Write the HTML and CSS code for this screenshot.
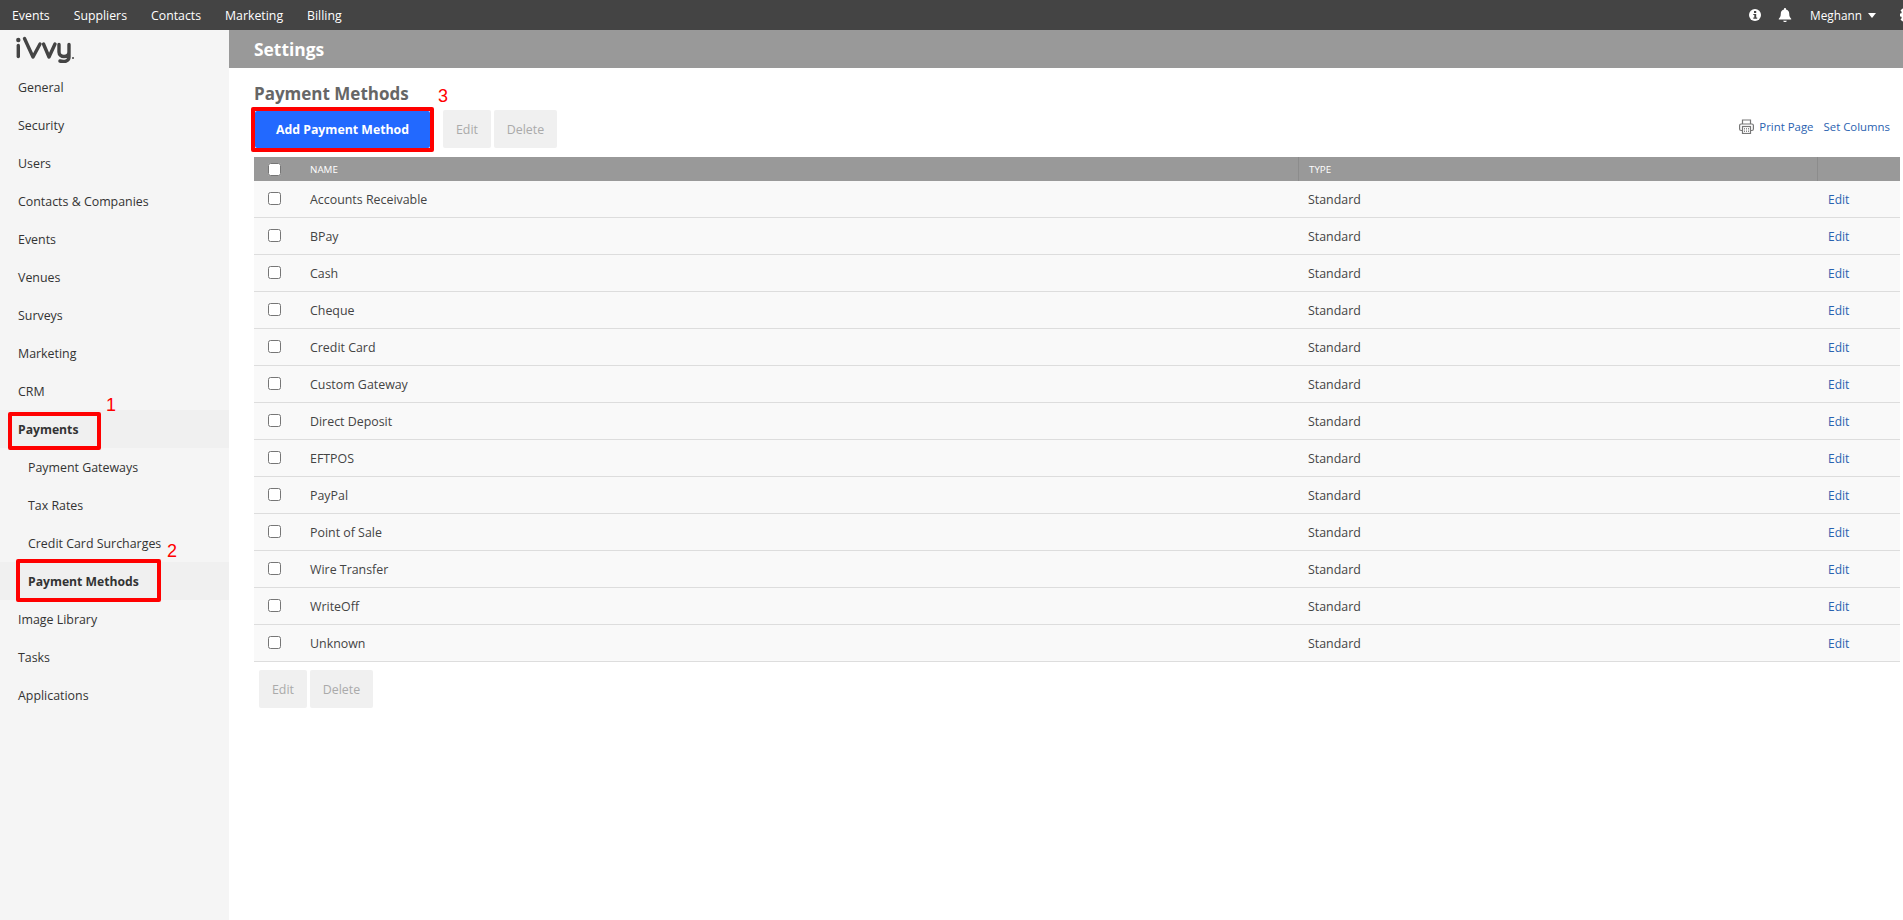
FILE: index.html
```html
<!DOCTYPE html>
<html lang="en">
<head>
<meta charset="utf-8">
<title>Settings - Payment Methods</title>
<link rel="stylesheet" href="styles.css">
</head>
<body>
<header class="topbar">
  <nav class="topnav">
    <a>Events</a><a>Suppliers</a><a>Contacts</a><a>Marketing</a><a>Billing</a>
  </nav>
  <div class="topright">
    <svg class="ico-info" viewBox="0 0 12 12"><circle cx="6" cy="6" r="6" fill="#fff"/><rect x="5" y="2" width="2.2" height="2" fill="#444"/><path d="M4.3 5h2.9v3.6h1v1.1H4.300V8.600h1V6.100h-1z" fill="#444"/></svg>
    <svg class="ico-bell" viewBox="0 0 14 14"><path d="M7 0c.6 0 1 .4 1 1v.6c2 .4 3.200 2 3.200 4 0 3 .8 4 2 5.200v.7H.8v-.7c1.200-1.200 2-2.200 2-5.200 0-2 1.200-3.600 3.200-4V1c0-.6.4-1 1-1zM5.200 12.700h3.600C8.800 13.500 8 14 7 14s-1.800-.5-1.800-1.300z" fill="#fff"/></svg>
    <span class="user">Meghann</span>
    <span class="caret"></span>
    <svg class="ico-cog" viewBox="0 0 14 14"><path d="M5.500 0h3v2l1.500.7 1.500-1.300 2 2-1.300 1.600.6 1.500H14v3h-1.200l-.6 1.500 1.300 1.500-2 2-1.500-1.300-1.500.6V14h-3v-1.200L4 12.200l-1.500 1.300-2-2L1.800 10l-.6-1.500H0v-3h1.200L1.800 4 .5 2.400l2-2L4 1.700l1.500-.6z" fill="#fff"/></svg>
  </div>
</header>
<div class="layout">
  <aside class="sidebar">
    <div class="logo">
      <svg viewBox="0 0 60 28" width="60" height="28">
        <g fill="none" stroke="#444" stroke-width="3.400" stroke-linecap="round" stroke-linejoin="round">
          <path d="M3.300 10.500v11"/>
          <path d="M9.500 3.500l8.500 18.500 7-13"/>
          <path d="M28.500 9l5.500 13 6-13"/>
          <path d="M44 9.500v7.500c0 6 10 6 10 0V9.500M54 16v6c0 4.500-5 5-9 4"/>
        </g>
        <circle cx="3.300" cy="5" r="2.200" fill="#444"/>
        <circle cx="58" cy="23" r="1" fill="#444"/>
      </svg>
    </div>
    <ul class="sidenav">
      <li>General</li>
      <li>Security</li>
      <li>Users</li>
      <li>Contacts &amp; Companies</li>
      <li>Events</li>
      <li>Venues</li>
      <li>Surveys</li>
      <li>Marketing</li>
      <li>CRM</li>
      <li class="active">Payments</li>
      <li class="sub">Payment Gateways</li>
      <li class="sub">Tax Rates</li>
      <li class="sub">Credit Card Surcharges</li>
      <li class="sub active">Payment Methods</li>
      <li>Image Library</li>
      <li>Tasks</li>
      <li>Applications</li>
    </ul>
  </aside>
  <main class="main">
    <div class="pagehead">Settings</div>
    <div class="content">
      <h2 class="title">Payment Methods</h2>
      <div class="toolbar">
        <div class="actions">
          <button class="btn primary">Add Payment Method</button>
          <button class="btn off edit">Edit</button>
          <button class="btn off del">Delete</button>
        </div>
        <div class="links">
          <svg class="ico-print" viewBox="0 0 15 15"><g fill="none" stroke="#777" stroke-width="1.200"><path d="M3.500 5V1h8v4"/><rect x=".6" y="5" width="13.800" height="6.500" rx="1.500"/><rect x="3.500" y="7.500" width="8" height="7" fill="#fff"/></g><path d="M5 9.500h5M5 11h5M5 12.500h5" stroke="#888" stroke-dasharray="1 1"/></svg>
          <a>Print Page</a>
          <a>Set Columns</a>
        </div>
      </div>
      <table class="grid">
        <thead>
          <tr>
            <th class="c-check"><input type="checkbox"></th>
            <th class="c-name">NAME</th>
            <th class="c-type">TYPE</th>
            <th class="c-act"></th>
          </tr>
        </thead>
        <tbody>
          <tr><td><input type="checkbox"></td><td>Accounts Receivable</td><td>Standard</td><td><a>Edit</a></td></tr>
          <tr><td><input type="checkbox"></td><td>BPay</td><td>Standard</td><td><a>Edit</a></td></tr>
          <tr><td><input type="checkbox"></td><td>Cash</td><td>Standard</td><td><a>Edit</a></td></tr>
          <tr><td><input type="checkbox"></td><td>Cheque</td><td>Standard</td><td><a>Edit</a></td></tr>
          <tr><td><input type="checkbox"></td><td>Credit Card</td><td>Standard</td><td><a>Edit</a></td></tr>
          <tr><td><input type="checkbox"></td><td>Custom Gateway</td><td>Standard</td><td><a>Edit</a></td></tr>
          <tr><td><input type="checkbox"></td><td>Direct Deposit</td><td>Standard</td><td><a>Edit</a></td></tr>
          <tr><td><input type="checkbox"></td><td>EFTPOS</td><td>Standard</td><td><a>Edit</a></td></tr>
          <tr><td><input type="checkbox"></td><td>PayPal</td><td>Standard</td><td><a>Edit</a></td></tr>
          <tr><td><input type="checkbox"></td><td>Point of Sale</td><td>Standard</td><td><a>Edit</a></td></tr>
          <tr><td><input type="checkbox"></td><td>Wire Transfer</td><td>Standard</td><td><a>Edit</a></td></tr>
          <tr><td><input type="checkbox"></td><td>WriteOff</td><td>Standard</td><td><a>Edit</a></td></tr>
          <tr><td><input type="checkbox"></td><td>Unknown</td><td>Standard</td><td><a>Edit</a></td></tr>
        </tbody>
      </table>
      <div class="actions bottom">
        <button class="btn off edit">Edit</button>
        <button class="btn off del">Delete</button>
      </div>
    </div>
  </main>
</div>
<div class="mark box-1"></div>
<div class="mark box-2"></div>
<div class="mark box-3"></div>
<span class="num num-1">1</span>
<span class="num num-2">2</span>
<span class="num num-3">3</span>
</body>
</html>
```
FILE: styles.css
```css
* { box-sizing: border-box; }
body {
  margin: 0;
  height: 920px;
  overflow: hidden;
  font-family: "Open Sans", sans-serif;
  font-size: 12.4px;
  color: #444;
  background: #fff;
  position: relative;
}
.topbar {
  height: 30px;
  background: #444;
  color: #fff;
  display: flex;
  justify-content: space-between;
  align-items: center;
  padding-left: 12px;
  overflow: hidden;
}
.topnav { display: flex; gap: 24px; font-size: 12.3px; }
.topright { display: flex; align-items: center; flex: none; margin-right: -11px; }
.topright > * { flex: none; }
.ico-info { width: 12px; height: 12px; }
.ico-bell { width: 14px; height: 14px; margin-left: 17px; }
.user { margin-left: 18px; font-size: 11.8px; }
.caret {
  margin-left: 6px;
  border-left: 4px solid transparent;
  border-right: 4px solid transparent;
  border-top: 5px solid #fff;
}
.ico-cog { width: 14px; height: 14px; margin-left: 24px; }
.layout { display: flex; height: 890px; }
.sidebar { width: 229px; flex: none; background: #f5f5f5; }
.logo { height: 38px; padding: 5px 0 0 15px; }
.logo svg { display: block; }
.sidenav { list-style: none; margin: 0; padding: 0; color: #333; }
.sidenav li { height: 38px; line-height: 39px; padding-left: 18px; }
.sidenav li.sub { padding-left: 28px; }
.sidenav li.active { background: #f0f0f0; font-weight: 700; font-size: 12.2px; }
.main { flex: 1; min-width: 0; }
.pagehead {
  height: 38px;
  background: #999;
  color: #fff;
  font-size: 17.4px;
  font-weight: 700;
  line-height: 38px;
  padding-left: 25px;
}
.content { padding: 14px 3px 0 25px; }
.title { margin: 0; font-size: 17px; font-weight: 700; color: #666; line-height: 24px; }
.toolbar { display: flex; justify-content: space-between; align-items: center; margin-top: 4px; height: 38px; }
.actions { display: flex; gap: 3px; }
.btn {
  height: 38px;
  border: 0;
  border-radius: 2px;
  font-family: inherit;
  font-size: 12.4px;
  padding: 0;
}
.btn.edit { width: 48px; }
.btn.del { width: 63px; }
.btn.primary {
  background: #2269ff;
  color: #fff;
  font-weight: 700;
  font-size: 12.3px;
  width: 175px;
  height: 37px;
  margin: 1px 10px 0 1px;
}
.btn.off { background: #f0f0f0; color: #aaa; }
.links { display: flex; align-items: center; gap: 10px; padding: 0 10px 6px 0; font-size: 11.4px; }
.links a, .grid a { color: #2a62b0; }
.ico-print { width: 15px; height: 15px; margin-right: -5px; }
.grid {
  width: 1646px;
  margin-top: 9px;
  table-layout: fixed;
  border-collapse: separate;
  border-spacing: 0;
  background: #f9f9f9;
}
.c-check { width: 46px; }
.c-type { width: 519px; }
.c-act { width: 83px; }
.grid th {
  height: 24px;
  padding: 0 10px;
  background: #999;
  color: #fff;
  font-size: 9.800px;
  font-weight: 400;
  text-align: left;
  border-left: 1px solid #8c8c8c;
}
.grid th:first-child, .grid th.c-name { border-left: 0; }
.grid td {
  height: 37px;
  padding: 0 10px;
  border-bottom: 1px solid #ddd;
}
.grid td a { font-size: 12px; padding-left: 1px; }
.grid th:first-child, .grid td:first-child { padding: 0 0 0 14px; }
.grid input { display: block; width: 13px; height: 13px; margin: 0; }
.grid td input { margin-top: -1px; }
.bottom { margin: 8px 0 0 5px; }
.mark { position: absolute; border: 4px solid #f00; border-radius: 2px; }
.box-1 { left: 8px; top: 412px; width: 93px; height: 38px; }
.box-2 { left: 16px; top: 559px; width: 145px; height: 43px; }
.box-3 { left: 251px; top: 107px; width: 183px; height: 45px; }
.num { position: absolute; color: #f00; font-family: "Liberation Sans", sans-serif; font-size: 18px; line-height: 20px; }
.num-1 { left: 106px; top: 395px; }
.num-2 { left: 167px; top: 541px; }
.num-3 { left: 438px; top: 86px; }
```
